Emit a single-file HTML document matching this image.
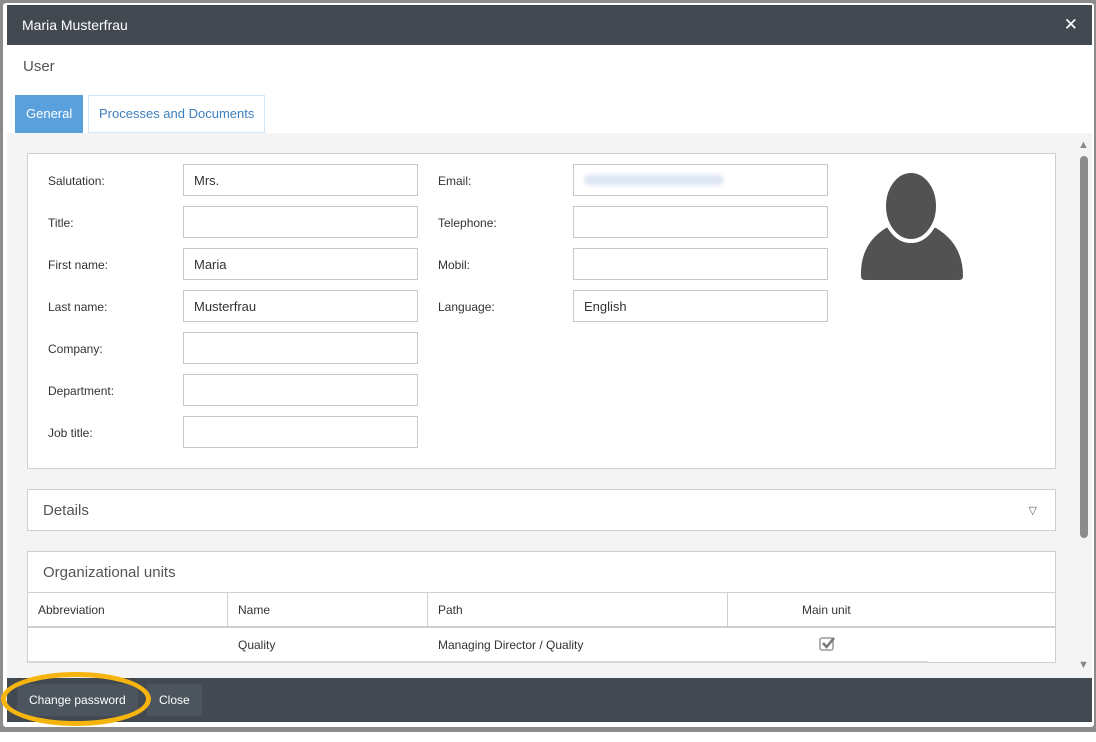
<!DOCTYPE html>
<html><head><style>
*{box-sizing:border-box;margin:0;padding:0}
body{width:1096px;height:742px;background:#fff;font-family:"Liberation Sans",sans-serif;font-size:13px;color:#333;position:relative;overflow:hidden}
.bd{position:absolute;left:0;top:0;width:1096px;height:732px;background:#8c8c8c}
.modal{position:absolute;left:3px;top:3px;width:1091px;height:724px;background:#fff;border-radius:3px}
.hdr{position:absolute;left:4px;top:2px;width:1085px;height:40px;background:#424950;color:#fff;font-size:14px;line-height:40px;padding-left:15px}
.x{position:absolute;right:14px;top:0;font-size:17px}
.user{position:absolute;left:20px;top:55px;font-size:15px;color:#555}
.tab{position:absolute;top:92px;height:38px;line-height:38px;font-size:13px;padding:0 11px}
.t1{left:12px;background:#5aa0dc;color:#fff}
.t2{left:85px;border:1px solid #d3e6f6;color:#3d7fc0;line-height:36px;padding:0 10px}
.content{position:absolute;left:4px;top:130px;width:1068px;height:545px;background:#f4f4f4}
.sb{position:absolute;left:1072px;top:130px;width:17px;height:545px;background:#f4f4f4}
.thumb{position:absolute;left:5px;top:23px;width:8px;height:382px;background:#8c8c8c;border-radius:4px}
.box{position:absolute;background:#fff;border:1px solid #cfcfcf}
.lbl{position:absolute;font-size:12px;color:#333}
.inp{position:absolute;width:235px;height:32px;border:1px solid #c8c8c8;background:#fff;padding-left:10px;line-height:32px;font-size:13px}
.ftr{position:absolute;left:4px;top:675px;width:1085px;height:44px;background:#424950}
.btn{position:absolute;top:6px;height:32px;line-height:32px;color:#fff;font-size:12px;padding:0 12px;background:#4c555d}
</style></head><body>
<div class="bd"></div>
<div class="modal">
<div class="hdr">Maria Musterfrau<span class="x">✕</span></div>
<div class="user">User</div>
<div class="tab t1">General</div>
<div class="tab t2">Processes and Documents</div>
<div class="content">
<div class="box" style="left:20px;top:20px;width:1029px;height:316px">
<div class="lbl" style="left:20px;top:20px">Salutation:</div><div class="inp" style="left:155px;top:10px">Mrs.</div>
<div class="lbl" style="left:20px;top:62px">Title:</div><div class="inp" style="left:155px;top:52px"></div>
<div class="lbl" style="left:20px;top:104px">First name:</div><div class="inp" style="left:155px;top:94px">Maria</div>
<div class="lbl" style="left:20px;top:146px">Last name:</div><div class="inp" style="left:155px;top:136px">Musterfrau</div>
<div class="lbl" style="left:20px;top:188px">Company:</div><div class="inp" style="left:155px;top:178px"></div>
<div class="lbl" style="left:20px;top:230px">Department:</div><div class="inp" style="left:155px;top:220px"></div>
<div class="lbl" style="left:20px;top:272px">Job title:</div><div class="inp" style="left:155px;top:262px"></div>
<div class="lbl" style="left:410px;top:20px">Email:</div><div class="inp" style="left:545px;top:10px;width:255px"><span style="display:inline-block;width:140px;height:10px;margin-top:10px;background:#dde6f3;border-radius:5px;filter:blur(2px);vertical-align:top"></span></div>
<div class="lbl" style="left:410px;top:62px">Telephone:</div><div class="inp" style="left:545px;top:52px;width:255px"></div>
<div class="lbl" style="left:410px;top:104px">Mobil:</div><div class="inp" style="left:545px;top:94px;width:255px"></div>
<div class="lbl" style="left:410px;top:146px">Language:</div><div class="inp" style="left:545px;top:136px;width:255px">English</div>
<svg style="position:absolute;left:832px;top:14px" width="104" height="114" viewBox="0 0 104 114">
<path d="M1 108 Q0 76 26 60 Q36 56 46 66 Q51 70 56 66 Q66 56 76 60 Q103 76 103 108 Q103 112 99 112 L5 112 Q1 112 1 108Z" fill="#525252"/>
<ellipse cx="51" cy="38" rx="27" ry="35" fill="#525252" stroke="#fff" stroke-width="4"/>
</svg>
</div>
<div class="box" style="left:20px;top:356px;width:1029px;height:42px"><div style="position:absolute;left:15px;top:12px;font-size:15px;color:#555">Details</div><div style="position:absolute;right:18px;top:14px;font-size:11px;color:#666">▽</div></div>
<div class="box" style="left:20px;top:418px;width:1029px;height:112px">
<div style="position:absolute;left:15px;top:12px;font-size:15px;color:#555">Organizational units</div>
<div style="position:absolute;left:0;top:40px;width:1027px;height:36px;border-top:1px solid #cfcfcf;border-bottom:2px solid #cfcfcf"></div>
<div style="position:absolute;left:199px;top:41px;height:33px;border-left:1px solid #cfcfcf"></div>
<div style="position:absolute;left:399px;top:41px;height:33px;border-left:1px solid #cfcfcf"></div>
<div style="position:absolute;left:699px;top:41px;height:33px;border-left:1px solid #cfcfcf"></div>
<div class="lbl" style="left:10px;top:51px">Abbreviation</div>
<div class="lbl" style="left:210px;top:51px">Name</div>
<div class="lbl" style="left:410px;top:51px">Path</div>
<div class="lbl" style="left:774px;top:51px">Main unit</div>
<div class="lbl" style="left:210px;top:86px">Quality</div>
<div class="lbl" style="left:410px;top:86px">Managing Director / Quality</div>
<svg style="position:absolute;left:791px;top:84px" width="18" height="16" viewBox="0 0 18 16"><rect x="1" y="2" width="13" height="12" rx="2" fill="none" stroke="#999" stroke-width="1.5"/><path d="M4 7 L7.5 11 L15 2" fill="none" stroke="#777" stroke-width="2.5"/></svg>
<div style="position:absolute;left:0;top:109px;width:900px;border-top:2px solid #d6d6d6"></div>
</div>
</div>
<div class="sb"><div style="position:absolute;left:3px;top:6px;font-size:11px;color:#888">▲</div><div class="thumb"></div><div style="position:absolute;left:3px;top:526px;font-size:11px;color:#888">▼</div></div>
<div class="ftr">
<div class="btn" style="left:10px;padding:0 12px">Change password</div>
<div class="btn" style="left:140px">Close</div>
<div style="position:absolute;left:-6px;top:-6px;width:150px;height:54px;border:5px solid #f6b40f;border-radius:50%"></div>
</div>
</div>
</body></html>
